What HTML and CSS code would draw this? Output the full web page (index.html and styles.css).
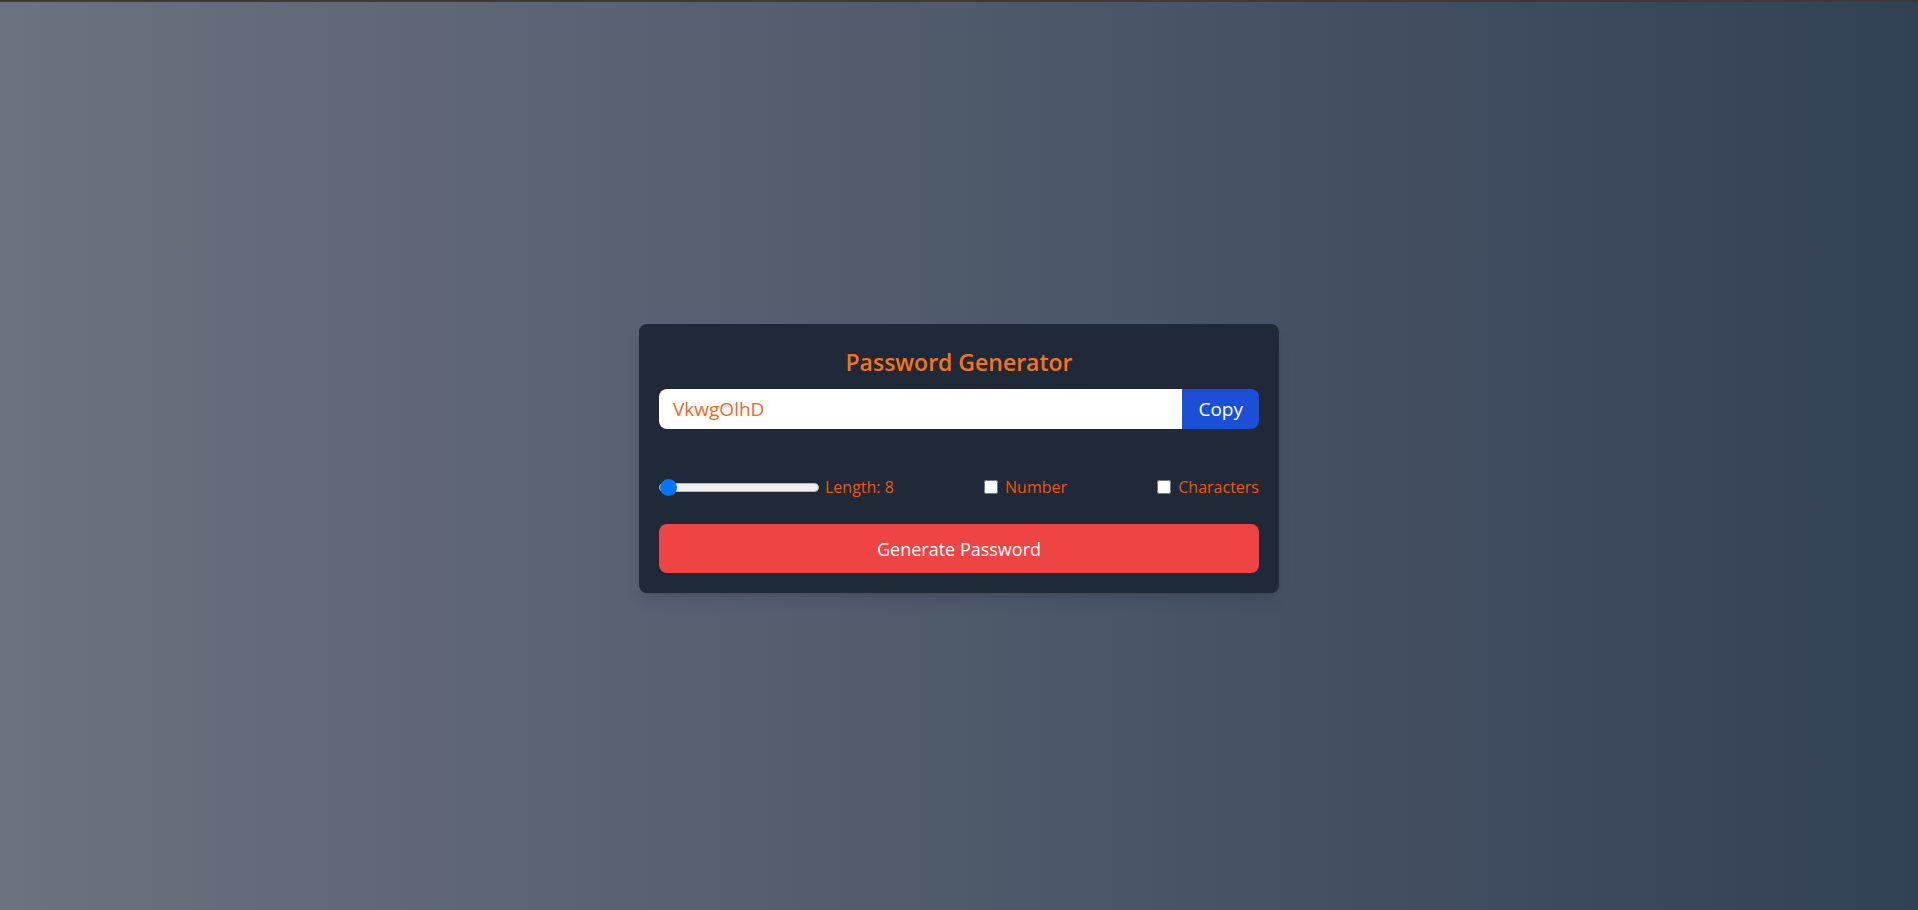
FILE: index.html
```html
<!DOCTYPE html>
<html lang="en">
<head>
<meta charset="utf-8">
<title>Password Generator</title>
<link rel="stylesheet" href="styles.css">
</head>
<body>
<main class="page">
  <section class="card">
    <h1 class="title">Password Generator</h1>
    <div class="field">
      <input class="password" type="text" value="VkwgOlhD" readonly>
      <button class="copy">Copy</button>
    </div>
    <div class="options">
      <div class="opt">
        <input class="range" type="range" min="6" max="100" value="6">
        <label class="lbl">Length: 8</label>
      </div>
      <div class="opt">
        <input class="check" type="checkbox" id="num">
        <label class="lbl" for="num">Number</label>
      </div>
      <div class="opt">
        <input class="check" type="checkbox" id="chars">
        <label class="lbl" for="chars">Characters</label>
      </div>
    </div>
    <button class="generate">Generate Password</button>
  </section>
</main>
</body>
</html>
```

FILE: styles.css
```css
* { box-sizing: border-box; }
html, body { margin: 0; padding: 0; }
body {
  font-family: "Open Sans", "Noto Sans", sans-serif;
}
.page {
  height: 910px;
  border-top: 2px solid #3b3b3b;
  padding-top: 5px;
  background: linear-gradient(to right, #6b7280, #334155);
  display: flex;
  align-items: center;
  justify-content: center;
}
.card {
  width: 640px;
  padding: 20px;
  background: #1f2937;
  border-radius: 8px;
  box-shadow: 0 10px 15px -3px rgba(0,0,0,0.1), 0 4px 6px -4px rgba(0,0,0,0.1);
}
.title {
  margin: 0 0 9px;
  font-size: 23px;
  line-height: 36px;
  font-weight: 600;
  color: #f97316;
  text-align: center;
}
.field {
  display: flex;
  height: 40px;
  border-radius: 8px;
  overflow: hidden;
}
.password {
  flex: 1;
  min-width: 0;
  border: none;
  outline: none;
  padding: 0 14px;
  font-family: inherit;
  font-size: 19px;
  color: #f7651f;
  background: #fff;
}
.copy {
  border: none;
  padding: 0 16px;
  background: #1d4ed8;
  color: #fff;
  font-family: inherit;
  font-size: 19px;
}
.options {
  margin-top: 44px;
  height: 28px;
  display: flex;
  align-items: center;
  justify-content: space-between;
}
.opt {
  display: flex;
  align-items: center;
}
.range {
  -webkit-appearance: none;
  appearance: none;
  width: 160px;
  height: 18px;
  margin: 0 6px 0 0;
  background: transparent;
}
.range::-webkit-slider-runnable-track {
  height: 9px;
  border-radius: 5px;
  background: #efefef;
  border: 1px solid #b9b9b9;
}
.range::-webkit-slider-thumb {
  -webkit-appearance: none;
  width: 17px;
  height: 17px;
  margin-top: -5px;
  border-radius: 50%;
  background: #0075ff;
  border: none;
}
.check {
  width: 14px;
  height: 14px;
  margin: 0 7px 0 0;
}
.lbl {
  font-size: 16px;
  color: #ea580c;
}
.generate {
  display: block;
  width: 100%;
  height: 49px;
  margin-top: 23px;
  border: none;
  border-radius: 8px;
  background: #ef4444;
  color: #fff;
  font-family: inherit;
  font-size: 18px;
}
```
